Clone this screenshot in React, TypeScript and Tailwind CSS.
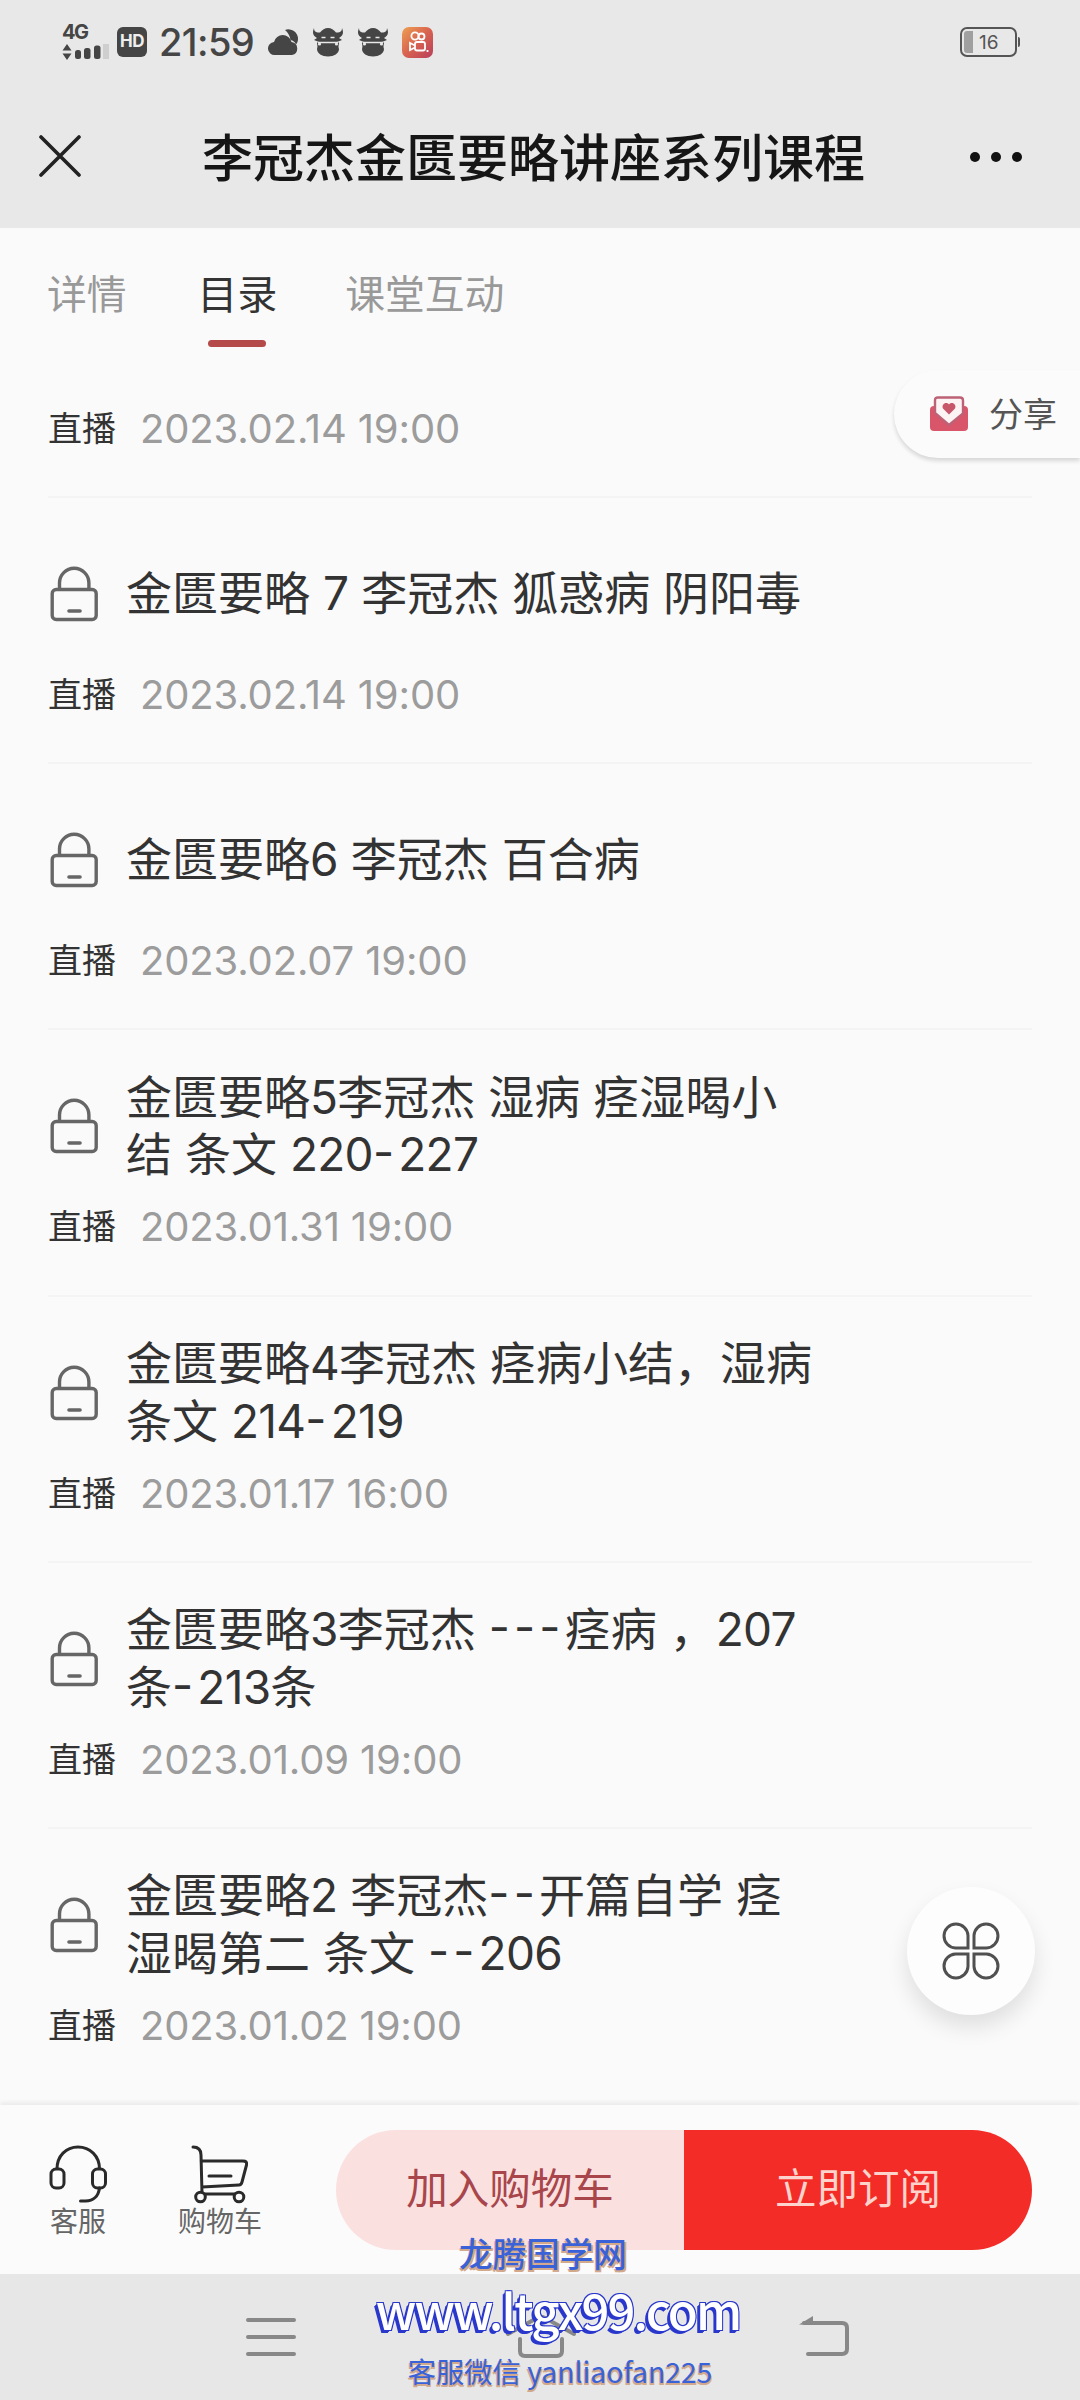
import React from 'react';

const lessons = [
  { title: ['金匮要略 7 李冠杰 狐惑病 阴阳毒'], time: '2023.02.14 19:00' },
  { title: ['金匮要略6 李冠杰 百合病'], time: '2023.02.07 19:00' },
  { title: ['金匮要略5李冠杰 湿病 痉湿暍小', '结 条文 220-227'], time: '2023.01.31 19:00' },
  { title: ['金匮要略4李冠杰 痉病小结，湿病', '条文 214-219'], time: '2023.01.17 16:00' },
  { title: ['金匮要略3李冠杰 ---痉病 ，207', '条-213条'], time: '2023.01.09 19:00' },
  { title: ['金匮要略2 李冠杰--开篇自学 痉', '湿暍第二 条文 --206'], time: '2023.01.02 19:00' },
];

// Digits run a bit wide and hyphens a bit narrow next to the Chinese glyphs
function Mixed({ text }: { text: string }) {
  return (
    <>
      {text.split(/([0-9]+|-+)/).map((part, i) => {
        if (/^[0-9]/.test(part)) return <span key={i} className="tracking-[-0.7px]">{part}</span>;
        if (/^-/.test(part)) return <span key={i} className="tracking-[4.200px] [font-feature-settings:'case']">{part}</span>;
        return <span key={i}>{part}</span>;
      })}
    </>
  );
}

function LockIcon() {
  return (
    <svg className="w-[48px] h-[56px] shrink-0" viewBox="0 0 48 56" fill="none" stroke="#666" strokeWidth="3.4">
      <rect x="2.2" y="23.5" width="44" height="30" rx="4" />
      <path d="M9.5 23.5V17a14.7 14.7 0 0 1 29.4 0v6.5" />
      <path d="M19 45h11" strokeWidth="3.6" strokeLinecap="round" />
    </svg>
  );
}

function BullIcon() {
  return (
    <svg className="w-[30px] h-[30px]" viewBox="0 0 30 30" fill="#454545">
      <path d="M1 1c0 4 3 5 6 4.500C9 3 12 1 15 1s6 2 8 4.500C26 6 29 5 29 1c2 5 1 8-3 10l3 2-5 2H6l-5-2 3-2C0 9-1 6 1 1z" />
      <path d="M4 15.500h22c0 3-1 3 0 6.500 0 4.500-5 7.500-11 7.500S4 26.500 4 22c1-3.500 0-3.500 0-6.500z" />
      <path d="M8.500 10.500h4M17.500 10.500h4M5 15.500h20" stroke="#e8e8e8" strokeWidth="1.500" />
      <circle cx="6.500" cy="17" r="1.600" fill="#e8e8e8" />
      <circle cx="23.500" cy="17" r="1.600" fill="#e8e8e8" />
    </svg>
  );
}

function StatusBar() {
  return (
    <div className="flex items-center h-[84px] pl-[62px] pr-[60px]">
      <div className="w-[50px] h-[36px] flex flex-col justify-between">
        <span className="h-[17px] text-[20px] leading-[16px] font-bold tracking-[-1.5px] text-[#454545]">4G</span>
        <svg className="w-[48px] h-[16px]" viewBox="0 0 48 16" fill="#454545">
          <path d="M5 0l4.500 6.500h-9zM5 16l4.500-6.500h-9z" />
          <rect x="13" y="6" width="6" height="9" rx="2.500" />
          <rect x="22" y="4" width="6.500" height="11" rx="2.500" />
          <rect x="32" y="1.500" width="6.500" height="13.500" rx="2.500" />
          <rect x="41" y="0" width="6" height="15" fill="#cfcfcf" />
        </svg>
      </div>
      <div className="ml-[5px] w-[30px] h-[30px] rounded-[6px] bg-[#454545] flex items-center justify-center text-[#eee] text-[17px] font-bold tracking-[-0.5px]">
        HD
      </div>
      <span className="ml-[12px] w-[99px] text-[38px] leading-none font-medium tracking-[-0.6px] text-[#454545] whitespace-nowrap">21:59</span>
      <svg className="ml-[10px] w-[32px] h-[30px]" viewBox="0 0 32 30" fill="#454545">
        <path d="M17 3a9.500 9.500 0 0 1 13 9c0 2-.6 4-2 5.500-1-2.500-3-4-5.500-4.500C22 9 20 5.500 17 3z" />
        <path d="M7 28a6.500 6.500 0 0 1-1-13 9 9 0 0 1 17.500 0A6.600 6.600 0 0 1 24 28z" />
      </svg>
      <div className="ml-[13px]"><BullIcon /></div>
      <div className="ml-[15px]"><BullIcon /></div>
      <svg className="ml-[14px] w-[31px] h-[31px]" viewBox="0 0 31 31" fill="none" stroke="#fff" strokeWidth="1.800">
        <defs>
          <linearGradient id="app" x1="0" y1="0" x2="1" y2="1">
            <stop offset="0" stopColor="#eda052" />
            <stop offset=".5" stopColor="#d8624f" />
            <stop offset="1" stopColor="#b83f5c" />
          </linearGradient>
        </defs>
        <rect width="31" height="31" rx="7" fill="url(#app)" stroke="none" />
        <circle cx="13" cy="9" r="3.600" />
        <circle cx="19.500" cy="9.500" r="3" />
        <rect x="13" y="15" width="10" height="8.500" rx="2" />
        <path d="M13 18.500l-5-2.500v7l5-2.500M25.500 23v2" />
      </svg>
      <div className="ml-auto flex items-center">
        <div className="w-[57px] h-[30px] border-2 border-[#555] rounded-[7px] p-[2px] flex items-center">
          <div className="w-[9px] h-[22px] rounded-l-[3px] bg-[#a0a0a0]" />
          <span className="flex-1 pl-[6px] text-[19px] leading-none text-[#555]">16</span>
        </div>
        <div className="ml-[1px] w-[2px] h-[10px] rounded-r bg-[#555]" />
      </div>
    </div>
  );
}

function TitleBar() {
  return (
    <div className="flex items-center h-[144px] pl-[39px] pr-[58px]">
      <svg className="w-[42px] h-[42px] mb-[1px]" viewBox="0 0 42 42" stroke="#222" strokeWidth="3.600" strokeLinecap="round">
        <path d="M2 2l38 38M40 2L2 40" />
      </svg>
      <h1 className="ml-[121px] mt-[5px] text-[51px] leading-none font-medium text-[#161616] whitespace-nowrap">李冠杰金匮要略讲座系列课程</h1>
      <div className="ml-auto mt-[1px] flex gap-[11px]">
        <i className="w-[10px] h-[10px] rounded-full bg-[#111]" />
        <i className="w-[10px] h-[10px] rounded-full bg-[#111]" />
        <i className="w-[10px] h-[10px] rounded-full bg-[#111]" />
      </div>
    </div>
  );
}

function LiveTime({ time }: { time: string }) {
  return (
    <div className="flex items-center h-[50px] leading-[50px] whitespace-nowrap">
      <span className="w-[92px] text-[34px] text-[#333]">直播</span>
      <span className="text-[40px] text-[#9c9c9c] tracking-[-0.15px]">{time}</span>
    </div>
  );
}

export default function App() {
  return (
    <div className="relative w-[1080px] h-[2400px] overflow-hidden flex flex-col bg-[#fafafa] font-['Inter','Noto_Sans_CJK_SC',sans-serif]">
      <header className="h-[228px] shrink-0 bg-[#e8e8e8]">
        <StatusBar />
        <TitleBar />
      </header>

      <nav className="flex h-[145px] shrink-0 pt-[37px] pl-[47px] text-[39.800px] leading-[60px] text-[#999]">
        <span>详情</span>
        <div className="ml-[71px] flex flex-col items-center text-[#333]">
          <span>目录</span>
          <i className="mt-[15px] w-[58px] h-[7px] rounded-full bg-[#b54a4b]" />
        </div>
        <span className="ml-[68px]">课堂互动</span>
      </nav>

      <main className="flex-1 px-[48px]">
        <div className="h-[125px] pt-[31px] border-b-2 border-[#f4f4f4]">
          <LiveTime time="2023.02.14 19:00" />
        </div>
        {lessons.map((l, i) => (
          <section key={i} className="h-[266.200px] border-b-2 border-[#f4f4f4] last:border-0">
            <div className="flex items-center h-[172px] pt-[20px] pl-[2px]">
              <LockIcon />
              <div className="ml-[28px] text-[46px] leading-[57.500px] text-[#333] whitespace-nowrap">
                {l.title.map((line) => (
                  <div key={line} className="h-[57.500px]"><Mixed text={line} /></div>
                ))}
              </div>
            </div>
            <LiveTime time={l.time} />
          </section>
        ))}
      </main>

      <footer className="relative h-[169px] shrink-0 flex items-center bg-[#fbfbfb] pl-[48px] pr-[48px] shadow-[0_-3px_4px_rgba(0,0,0,0.06)]">
        <div className="flex flex-col items-center w-[60px] pt-[4px]">
          <svg className="w-[60px] h-[60px]" viewBox="0 0 60 60" fill="none" stroke="#2a2a2a" strokeWidth="3">
            <path d="M9 25C9 12 18 3 30 3s21.500 9 21.500 22" />
            <rect x="3" y="25" width="13" height="19" rx="5" />
            <rect x="44.500" y="25" width="13" height="19" rx="5" />
            <path d="M51.500 44c-1 8-6 13-14 13h-5" strokeLinecap="round" />
          </svg>
          <span className="text-[28px] leading-[36px] text-[#666] whitespace-nowrap">客服</span>
        </div>
        <div className="ml-[67px] flex flex-col items-center w-[90px] pt-[4px]">
          <svg className="w-[60px] h-[60px]" viewBox="0 0 60 60" fill="none" stroke="#2a2a2a" strokeWidth="3" strokeLinecap="round" strokeLinejoin="round">
            <path d="M3 3c5 0 8 2 8 8l1 38M11 17h42c3 0 4 1 3.500 4L52 38c-.5 2-1 3-3 3l-37 2" />
            <path d="M19 32h22M15 50h30" />
            <circle cx="10.500" cy="53" r="4.800" fill="#fbfbfb" />
            <circle cx="49" cy="53" r="4.800" fill="#fbfbfb" />
          </svg>
          <span className="text-[28px] leading-[36px] text-[#666] whitespace-nowrap">购物车</span>
        </div>
        <div className="ml-auto flex w-[696px] h-[120px] rounded-full overflow-hidden text-[41.500px]">
          <button className="w-[348px] bg-[#fbe0e0] text-[#a8464b]">加入购物车</button>
          <button className="w-[348px] bg-[#f42c28] text-[#fdd3cb]">立即订阅</button>
        </div>
      </footer>

      <div className="flex h-[126px] shrink-0 items-center bg-[#e7e7e7] pl-[244px]">
        <svg className="w-[54px] h-[44px]" viewBox="0 0 54 44" stroke="#888" strokeWidth="4" strokeLinecap="round">
          <path d="M4 5h46M4 22h46M4 39h46" />
        </svg>
        <svg className="ml-[206px] w-[74px] h-[44px]" viewBox="0 0 74 44" fill="none" stroke="#888" strokeWidth="4" strokeLinecap="round">
          <path d="M4 19L33 3q4-2 8 0l29 16M16 24v12q0 5 5 5h32q5 0 5-5V24" />
        </svg>
        <svg className="ml-[218px] w-[56px] h-[44px]" viewBox="0 0 56 44" fill="none" stroke="#888" strokeWidth="4" strokeLinecap="round">
          <path d="M8 8h38q5 0 5 5v21q0 5-5 5H12" />
          <path d="M3 9.500L17 1v9z" fill="#888" stroke="none" />
        </svg>
      </div>

      {/* share tab pinned to the right edge */}
      <div className="absolute right-0 top-[370px] w-[186px] h-[88px] rounded-l-full bg-[#fbfbfb] shadow-[0_3px_4px_rgba(0,0,0,0.14)] flex items-center pl-[35px]">
        <svg className="w-[40px] h-[36px]" viewBox="0 0 40 36">
          <rect x="1" y="10" width="38" height="25" rx="4" fill="#d9566a" />
          <path d="M6 4.500q0-3 3-3h22q3 0 3 3v13L20 29 6 17z" fill="#fcf3f5" stroke="#bd6276" strokeWidth="2.400" />
          <path d="M20 18.500l-6-6c-2-4 3-7.500 6-4 3-3.500 8 0 6 4z" fill="#c8566a" />
        </svg>
        <span className="ml-[20px] mt-[2px] text-[34px] leading-none text-[#555]">分享</span>
      </div>

      <div className="absolute left-[907px] top-[1887px] w-[128px] h-[128px] rounded-full bg-[#fdfdfd] shadow-[0_12px_22px_rgba(0,0,0,0.11)] flex items-center justify-center">
        <svg className="w-[60px] h-[60px]" viewBox="0 0 60 60" fill="none" stroke="#505050" strokeWidth="3">
          <path d="M27 27H14.500A12 12 0 1 1 27 14.500zM33 27h12.500A12 12 0 1 0 33 14.500zM27 33H14.500A12 12 0 1 0 27 45.500zM33 33h12.500A12 12 0 1 1 33 45.500z" />
        </svg>
      </div>

      {/* site watermark */}
      <div className="absolute left-[376px] top-[2230px] w-[368px] flex flex-col items-center whitespace-nowrap font-['Noto_Sans_CJK_SC']">
        <span className="h-[46px] mr-[34px] leading-[46px] text-[33.600px] font-medium text-[#3a62d8] [text-shadow:-1px_2px_0_#d3a98c,2px_2px_0_#d3a98c]">龙腾国学网</span>
        <span className="h-[72px] mr-[4px] leading-[66px] text-[49px] font-medium tracking-[-1.900px] text-white [text-shadow:-1px_-1px_0_#2a38cc,1px_-1px_0_#2a38cc,-1px_1px_0_#2a38cc,1px_1px_0_#2a38cc,-2px_2px_0_#2a38cc,-3px_3px_0_#2a38cc]">www.ltgx99.com</span>
        <span className="h-[46px] leading-[46px] text-[28.300px] text-[#3a62d8] [text-shadow:-1px_2px_0_#d3a98c,1px_2px_0_#d3a98c]">客服微信 yanliaofan225</span>
      </div>
    </div>
  );
}
